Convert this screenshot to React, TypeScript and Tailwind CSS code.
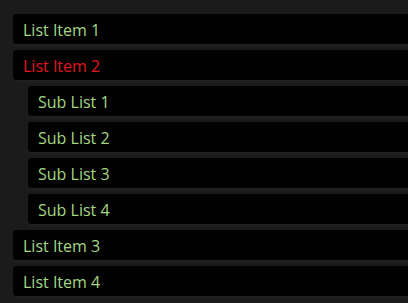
import React from 'react';

type Item = { label: string; active?: boolean; children?: string[] };

const ITEMS: Item[] = [
  { label: 'List Item 1' },
  { label: 'List Item 2', active: true, children: ['Sub List 1', 'Sub List 2', 'Sub List 3', 'Sub List 4'] },
  { label: 'List Item 3' },
  { label: 'List Item 4' },
];

function Row({ label, active, sub }: { label: string; active?: boolean; sub?: boolean }) {
  return (
    <li className={`mb-[6px] flex h-[30px] items-center rounded-l-[3px] bg-[#020202] pl-[10px] shadow-[0_2px_3px_rgba(255,255,255,0.035)] ${sub ? 'ml-[15px]' : ''}`}>
      <span className={`pt-[1px] text-[16px] leading-none ${active ? 'text-[#e0141c]' : 'text-[#a4d784]'}`}>{label}</span>
    </li>
  );
}

export default function App() {
  return (
    <div className="h-[303px] w-[408px] overflow-hidden bg-[#1b1b1b] pl-[13px] pt-[14px]" style={{ fontFamily: '"Open Sans", "Noto Sans", sans-serif' }}>
      <ul>
        {ITEMS.map((item) => (
          <React.Fragment key={item.label}>
            <Row label={item.label} active={item.active} />
            {item.children?.map((c) => <Row key={c} label={c} sub />)}
          </React.Fragment>
        ))}
      </ul>
    </div>
  );
}
